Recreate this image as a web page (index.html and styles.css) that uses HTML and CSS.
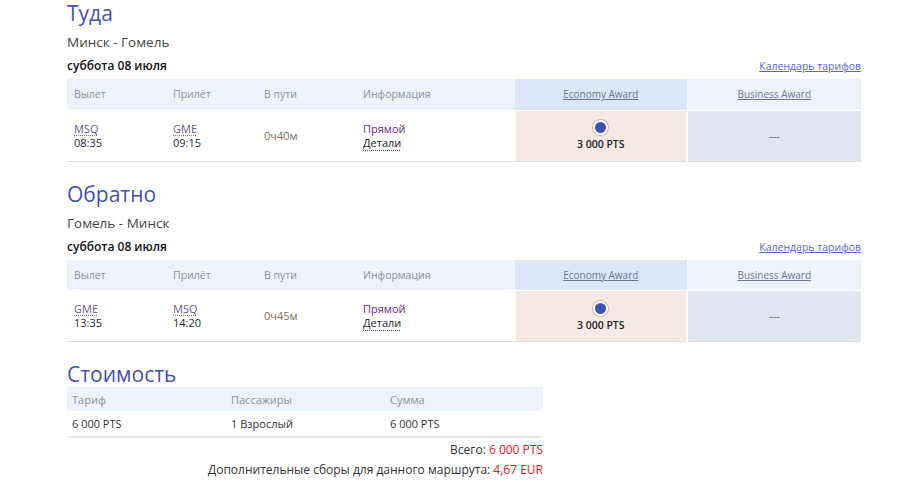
FILE: index.html
```html
<!DOCTYPE html>
<html lang="ru">
<head>
<meta charset="utf-8">
<link rel="stylesheet" href="styles.css">
</head>
<body>
<div class="page">
  <section class="leg">
    <h2 class="title">Туда</h2>
    <div class="route">Минск - Гомель</div>
    <div class="date-row">
      <span class="date">суббота 08 июля</span>
      <a class="cal-link" href="#">Календарь тарифов</a>
    </div>
    <table class="flights">
      <colgroup>
        <col class="c1"><col class="c2"><col class="c3"><col class="c4"><col class="c5"><col class="c6">
      </colgroup>
      <thead>
        <tr>
          <th>Вылет</th><th>Прилёт</th><th>В пути</th><th>Информация</th>
          <th class="award eco-h"><span class="award-link">Economy Award</span></th>
          <th class="award bus-h"><span class="award-link">Business Award</span></th>
        </tr>
      </thead>
      <tbody>
        <tr>
          <td><span class="code">MSQ</span><br><span class="time">08:35</span></td>
          <td><span class="code">GME</span><br><span class="time">09:15</span></td>
          <td class="dur">0ч40м</td>
          <td><span class="direct">Прямой</span><br><span class="details">Детали</span></td>
          <td class="eco"><span class="radio"></span><div class="pts">3 000 PTS</div></td>
          <td class="bus">---</td>
        </tr>
      </tbody>
    </table>
  </section>

  <section class="leg leg-back">
    <h2 class="title">Обратно</h2>
    <div class="route">Гомель - Минск</div>
    <div class="date-row">
      <span class="date">суббота 08 июля</span>
      <a class="cal-link" href="#">Календарь тарифов</a>
    </div>
    <table class="flights">
      <colgroup>
        <col class="c1"><col class="c2"><col class="c3"><col class="c4"><col class="c5"><col class="c6">
      </colgroup>
      <thead>
        <tr>
          <th>Вылет</th><th>Прилёт</th><th>В пути</th><th>Информация</th>
          <th class="award eco-h"><span class="award-link">Economy Award</span></th>
          <th class="award bus-h"><span class="award-link">Business Award</span></th>
        </tr>
      </thead>
      <tbody>
        <tr>
          <td><span class="code">GME</span><br><span class="time">13:35</span></td>
          <td><span class="code">MSQ</span><br><span class="time">14:20</span></td>
          <td class="dur">0ч45м</td>
          <td><span class="direct">Прямой</span><br><span class="details">Детали</span></td>
          <td class="eco"><span class="radio"></span><div class="pts">3 000 PTS</div></td>
          <td class="bus">---</td>
        </tr>
      </tbody>
    </table>
  </section>

  <section class="cost">
    <h2 class="title">Стоимость</h2>
    <table class="cost-table">
      <colgroup><col class="k1"><col class="k2"><col class="k3"></colgroup>
      <thead>
        <tr><th>Тариф</th><th>Пассажиры</th><th>Сумма</th></tr>
      </thead>
      <tbody>
        <tr><td>6 000 PTS</td><td>1 Взрослый</td><td>6 000 PTS</td></tr>
      </tbody>
    </table>
    <div class="totals">
      <div>Всего: <span class="red">6 000 PTS</span></div>
      <div>Дополнительные сборы для данного маршрута: <span class="red">4,67 EUR</span></div>
    </div>
  </section>
</div>
</body>
</html>
```
FILE: styles.css
```css
* { box-sizing: border-box; }
html, body { margin: 0; padding: 0; background: #fff; }
body {
  font-family: "Open Sans", "Noto Sans", sans-serif;
  color: #333;
  font-size: 11px;
}
.page {
  width: 794px;
  margin-left: 67px;
}
.title {
  margin: 0;
  font-size: 21px;
  line-height: 26px;
  font-weight: 400;
  color: #4450b4;
}
.route {
  margin-top: 8px;
  font-size: 13.5px;
  line-height: 16px;
  color: #444;
}
.date-row {
  margin-top: 8px;
  display: flex;
  justify-content: space-between;
  align-items: center;
  line-height: 16px;
}
.date {
  font-size: 12px;
  font-weight: 600;
  color: #111;
}
.cal-link {
  font-size: 10.5px;
  color: #5566cc;
  text-decoration: underline;
}
.flights {
  margin-top: 5px;
  width: 100%;
  border-collapse: collapse;
  table-layout: fixed;
}
.c1 { width: 99px; }
.c2 { width: 91px; }
.c3 { width: 99px; }
.c4 { width: 159px; }
.c5 { width: 172px; }
.c6 { width: 174px; }
.flights th {
  height: 31px;
  padding: 0 7px;
  background: #eef2fa;
  text-align: left;
  font-weight: 400;
  color: #8a8f9a;
  font-size: 10.5px;
}
.flights th.award { text-align: center; font-size: 10px; }
.flights th.eco-h { background: #dce6f8; border-right: 1px solid #fff; }
.award-link {
  color: #6b7593;
  text-decoration: underline;
}
.flights td {
  height: 51px;
  padding: 0 7px;
  vertical-align: middle;
  border-bottom: 1px solid #dedede;
  font-size: 11px;
  line-height: 14px;
  border-top: 1px solid #fff;
}
.code {
  color: #6a5590;
  text-decoration: underline dotted #777;
  text-underline-offset: 2px;
}
.time { color: #1b2440; font-weight: 500; }
.dur { color: #7d6d55; }
.direct { color: #6a2a7a; }
.details {
  color: #1a1a2a;
  font-weight: 500;
  text-decoration: underline dotted #444;
  text-underline-offset: 3px;
}
.flights td.eco {
  background: #f4eae3;
  text-align: center;
  border-right: 2px solid #fff;
  border-left: 1px solid #fff;
}
.flights td.bus {
  background: #e1e5f0;
  text-align: center;
  color: #555;
}
.radio {
  display: inline-block;
  width: 15px;
  height: 15px;
  border-radius: 50%;
  background: #3f51b5;
  border: 2px solid #fff;
  box-shadow: 0 0 0 1px #bbb;
  vertical-align: middle;
}
.pts {
  margin-top: 2px;
  font-size: 10.5px;
  font-weight: 600;
  color: #222;
}
.leg-back, .cost { margin-top: 19px; }
.cost-table {
  width: 476px;
  border-collapse: collapse;
  table-layout: fixed;
}
.k1 { width: 159px; }
.k2 { width: 159px; }
.k3 { width: 158px; }
.cost-table th {
  height: 24px;
  padding: 0 5px;
  background: #eef2fa;
  text-align: left;
  font-weight: 400;
  color: #8a8f9a;
}
.cost-table td {
  height: 26px;
  padding: 0 5px;
  border-bottom: 2px solid #e4e4e4;
  color: #333;
}
.totals {
  width: 476px;
  text-align: right;
  font-size: 12px;
  line-height: 20px;
  padding-top: 2px;
  color: #333;
}
.red { color: #e0141e; }
```
